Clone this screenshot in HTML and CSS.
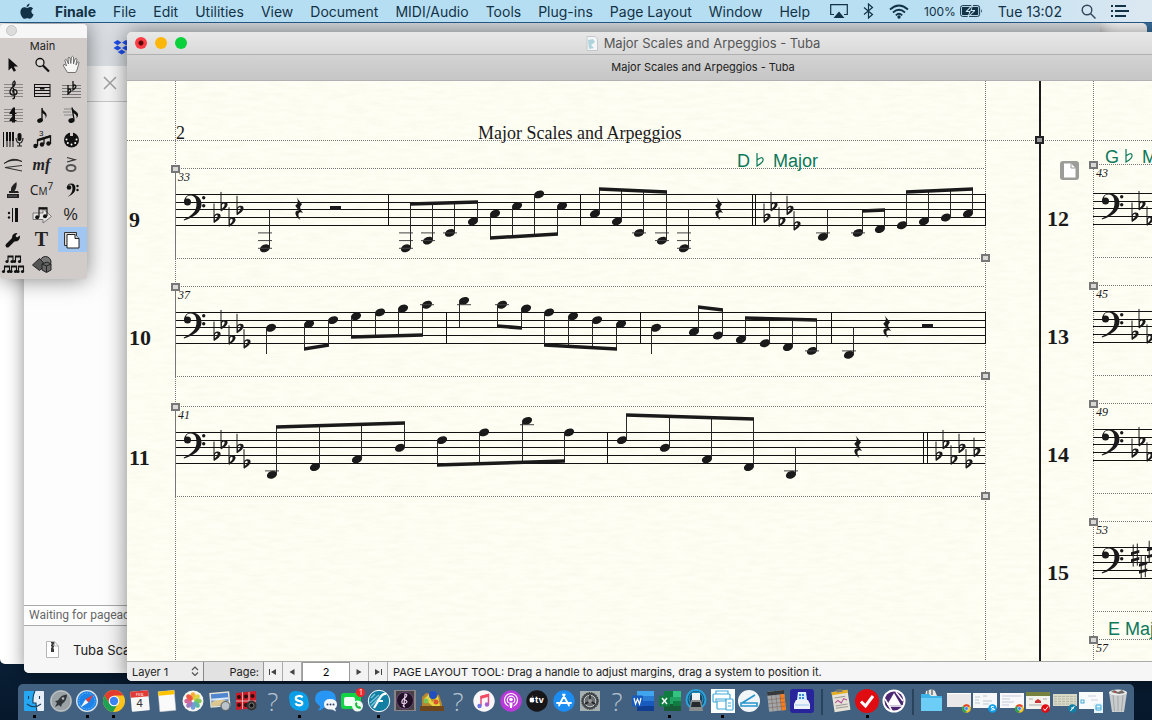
FILE: index.html
```html
<!DOCTYPE html>
<html lang="en">
<head>
    <meta charset="UTF-8">
    <meta name="viewport" content="width=device-width, initial-scale=1.0">
    <title>Major Scales and Arpeggios - Tuba</title>
    <link rel="stylesheet" href="styles.css">
</head>
<body>
    <header class="menubar">
        <nav class="menus">
            <button class="apple" aria-label="Apple menu"><svg width="14" height="17" viewBox="0 0 14 17"><path d="M9.6 0.5c.1 1.800-1.400 3.500-3 3.500-.2-1.600 1.400-3.300 3-3.500zM7.100 5c.8 0 1.700-.9 3.100-.9 1.200 0 2.300.7 2.900 1.500-2.500 1.500-2.100 4.900.5 5.900-.6 1.700-2.100 4.300-3.600 4.300-1 0-1.400-.6-2.700-.6s-1.700.6-2.700.6C2.700 15.800.4 12.200.4 9c0-3.100 2-4.700 3.900-4.700 1.200 0 2.100.7 2.800.7z"/></svg></button>
            <button class="app-name">Finale</button>
            <button>File</button>
            <button>Edit</button>
            <button>Utilities</button>
            <button>View</button>
            <button>Document</button>
            <button>MIDI/Audio</button>
            <button>Tools</button>
            <button>Plug-ins</button>
            <button>Page Layout</button>
            <button>Window</button>
            <button>Help</button>
        </nav>
        <div class="extras">
            <svg width="18" height="15" viewBox="0 0 18 15"><path d="M4 10.500H.7V.7h16.600v9.800H14" fill="none" stroke="#123247" stroke-width="1.200"/><path d="M9 7.500l5.500 6.500h-11z"/></svg>
            <svg width="11" height="16" viewBox="0 0 11 16"><path d="M1 4.500l8.500 7L5.500 15V1l4 3.500-8.500 7" fill="none" stroke="#123247" stroke-width="1.200"/></svg>
            <svg width="20" height="15" viewBox="0 0 20 15" fill="none" stroke="#123247" stroke-width="1.800"><path d="M1 5.500q9-8 18 0M4 8.500q6-5.500 12 0M6.800 11.300q3.200-3 6.400 0"/><circle cx="10" cy="13" r=".8"/></svg>
            <span class="battery">100% <svg width="23" height="12" viewBox="0 0 23 12"><rect x=".6" y=".6" width="19" height="10.800" rx="2" fill="none" stroke="#123247"/><rect x="2" y="2" width="16.200" height="8"/><path d="M21 4q1.800 2 0 4z"/><path d="M12.500 0L6 6.500h4L8 12l7-6.500h-4z" fill="#cfe6f3" stroke="#cfe6f3"/><path d="M12 1.500L7.500 6h3.200L9 10.500 13.500 6h-3.200z"/></svg></span>
            <span class="clock">Tue 13:02</span>
            <svg width="15" height="15" viewBox="0 0 15 15" fill="none" stroke="#33475a" stroke-width="1.400"><circle cx="6" cy="6" r="4.800"/><path d="M9.500 9.500l5 5"/></svg>
            <svg width="18" height="12" viewBox="0 0 18 12"><path d="M0 0h2v2H0zM4 0h11v2H4zM0 5h2v2H0zM4 5h14v2H4zM0 10h2v2H0zM4 10h11v2H4z"/></svg>
        </div>
    </header>

    <main class="desktop">
        <section class="window back-window"></section>

        <section class="window browser">
            <div class="tab-strip">
                <svg class="dropbox" width="18" height="15" viewBox="0 0 18 15" fill="#1d4ff0"><path d="M4.500 0l4 2.600-4 2.600-4-2.600zM13 0l4 2.600-4 2.600-4-2.600zM4.500 5.400l4 2.600-4 2.600-4-2.600zM13 5.400L17 8l-4 2.600L9 8zM8.700 9.500l4 2.500-4 2.600-4-2.600z"/></svg>
            </div>
            <div class="toolbar">
                <button aria-label="Stop"><svg width="14" height="14" viewBox="0 0 14 14"><path d="M1 1l12 12M13 1L1 13" stroke="#a2a2a4" stroke-width="1.500"/></svg></button>
            </div>
            <div class="page-area"></div>
            <div class="status">Waiting for pagead2.googlesyndication.com</div>
            <div class="downloads">
                <svg width="13" height="17" viewBox="0 0 13 17"><path d="M.5.500h8L12.500 5v11.500H.5z" fill="#fff" stroke="#b5b5b5"/><path d="M8.500.5V5h4" fill="none" stroke="#b5b5b5"/><path d="M5 1h3v10H5z" fill="#3c3c3c"/><path d="M5 3h1M7 4h1M5 6h1M7 7h1" stroke="#ddd"/></svg>
                <span>Tuba Scales.zip</span>
            </div>
        </section>

        <section class="window finale">
            <div class="titlebar">
                <div class="lights">
                    <button class="close" aria-label="Close"></button>
                    <button class="minimise" aria-label="Minimise"></button>
                    <button class="zoom" aria-label="Zoom"></button>
                </div>
                <h1><svg width="12" height="15" viewBox="0 0 12 15"><path d="M1 .5h8L11.500 3v11.500H1z" fill="#f3f5f6" stroke="#c4c8ca"/><path d="M2 4l5-1 2 3-4 3 3 3-5 1z" fill="#9dcbd6" opacity=".8"/></svg>Major Scales and Arpeggios - Tuba</h1>
            </div>
            <div class="doc-tab">Major Scales and Arpeggios - Tuba</div>
            <svg class="score" id="score">
                <defs>
                    <filter id="paper" x="0" y="0" width="100%" height="100%">
                        <feTurbulence type="fractalNoise" baseFrequency="0.05 0.25" numOctaves="3" seed="4"/>
                        <feColorMatrix values="0 0 0 0 .7  0 0 0 0 .68  0 0 0 0 .5  .7 0 0 0 -.28"/>
                    </filter>
                    <g id="clef">
                        <path d="M9.200-8C9-13 13-15.500 17-15.300C22.500-15 26.500-11.500 26.500-5.500C26.500 2 19 8 9 10.600L8.700 9.700C17 6 21.500 1.500 21.500-5.500C21.500-11 19.500-14 16-14.200C12.500-14.300 11-12.500 11-10.500L12-8z"/>
                        <circle cx="12.500" cy="-7.700" r="3.500"/>
                        <circle cx="28.700" cy="-12" r="1.700"/>
                        <circle cx="28.700" cy="-4" r="1.700"/>
                    </g>
                    <g id="flat">
                        <path d="M0-14v19" stroke="#1a1a1a" fill="none"/>
                        <path fill-rule="evenodd" d="M0-2C2-4.800 6.800-4.500 6.600-1.500C6.400 1.500 3 3.500 0 5.500zM.8-1V2.800C2.800 1.200 3.800-.3 3.600-1.700C3.400-3 2-2.600.8-1z"/>
                    </g>
                    <g id="sharp">
                        <path d="M-1.800-10.500V11.500M2.300-11.500V10.500" stroke="#1a1a1a" fill="none"/>
                        <path d="M-4-2.800L4.300-5.200V-2.300L-4 .1zM-4 4.200L4.300 1.800V4.700L-4 7.100z"/>
                    </g>
                    <path id="rest" d="M-2.500-12L3-5C.5-2.500 .5-1 4 3.700C0 1.500-2.500 4 1.500 10.800C-5 6.500-5 .5-.2 1.200L-3.800-3.500C-.5-6-.5-8.500-2.500-12z"/>
                </defs>
                <rect width="100%" height="100%" filter="url(#paper)" opacity=".35"/>
                <g id="page" transform="translate(-127 -81)"></g>
            </svg>
            <div class="statusbar">
                <div class="layer">
                    <select aria-label="Layer"><option>Layer 1</option></select>
                    <svg width="8" height="10" viewBox="0 0 8 10"><path d="M1 4l3-3 3 3M1 6.500l3 3 3-3" fill="none" stroke="#555" stroke-width="1.200"/></svg>
                </div>
                <label for="pageNumber">Page:</label>
                <button aria-label="First page"><svg width="8" height="8" viewBox="0 0 8 8"><path d="M0 1h1v6H0zM7 1v6L2 4z"/></svg></button>
                <button aria-label="Previous page"><svg width="8" height="8" viewBox="0 0 8 8"><path d="M6.500 1v6L1.500 4z"/></svg></button>
                <input id="pageNumber" type="text" value="2">
                <button aria-label="Next page"><svg width="8" height="8" viewBox="0 0 8 8"><path d="M1.500 1v6l5-3z"/></svg></button>
                <button aria-label="Last page"><svg width="8" height="8" viewBox="0 0 8 8"><path d="M7 1h1v6H7zM1 1v6l5-3z"/></svg></button>
                <p>PAGE LAYOUT TOOL: Drag a handle to adjust margins, drag a system to position it.</p>
            </div>
        </section>

        <section class="palette">
            <div class="palette-bar"><button aria-label="Close palette"></button></div>
            <h2>Main</h2>
            <div class="tools">
                <button aria-label="Selection"><svg viewBox="0 0 24 22"><path d="M7.500 4v12.500l3-2.800 2.300 4 2.200-1.200-2.200-4h4.200z"/></svg></button>
                <button aria-label="Zoom"><svg viewBox="0 0 24 22"><circle cx="10" cy="8.500" r="4" fill="#dedad8" stroke="#111" stroke-width="1.300"/><path d="M13 11.500l6 6" stroke="#111" stroke-width="2.200"/></svg></button>
                <button aria-label="Hand grabber"><svg viewBox="0 0 24 22"><path d="M8.500 18.500L4.500 12q-.5-2 1.500-1.500l1.500 1.500L5.800 6q.7-1.600 2 0L9.500 10 9 4q1-1.600 2 0l.8 5.500L12.500 3q1.300-1.500 2 0v7L16 5q1.400-1.300 2 0l-1 6 1.500-3q1.500-.7 1.500.8l-2 7.200-1.500 2.500z" fill="#f7f5f4" stroke="#666" stroke-width=".9"/></svg></button>

                <button aria-label="Staff"><svg viewBox="0 0 24 22"><path d="M3 5.500h19M3 8.500h19M3 11.500h19M3 14.500h19M3 17.500h19" stroke="#8a8785"/><path d="M11.500 19.500q2 .5 2-1.500L11.800 5q0-2.500 1.700-3 1.500 2.500-.5 5-4 3-4 6 0 3 3.500 3t3.500-3q-.5-2.500-2.500-2.300-2.500.8-1.300 3" fill="none" stroke="#111" stroke-width="1.300"/></svg></button>
                <button aria-label="Measure"><svg viewBox="0 0 24 22"><path d="M4 5.500h16M4 8.500h16M4 11.500h16M4 14.500h16M4 17.500h16M4.500 5v13M20 5v13" stroke="#111" fill="none"/><path d="M10 8.500h4.500v2H10z"/></svg></button>
                <button aria-label="Key signature"><svg viewBox="0 0 24 22"><path d="M3 6.500h19M3 9.500h19M3 12.500h19M3 15.500h19M3 18.500h19" stroke="#777"/><path d="M9 6v9q4-3 2.500-4.500T9 12M14 2v9q4-3 2.500-4.500T14 8" fill="none" stroke="#111" stroke-width="1.300"/></svg></button>

                <button aria-label="Time signature"><svg viewBox="0 0 24 22"><path d="M3 5.500h19M3 8.500h19M3 11.500h19M3 14.500h19M3 17.500h19" stroke="#8a8785"/><path d="M12 3.500h2V9h1.500v1H14v1.500h-3V10H8.500V9zM12 11.500h2V16h1.500v1H14v1.500h-3V17H8.500v-1z"/></svg></button>
                <button aria-label="Simple entry"><svg viewBox="0 0 24 22"><path d="M12 4v13" stroke="#111" stroke-width="1.300"/><ellipse cx="10" cy="16.500" rx="2.900" ry="2.200" transform="rotate(-20 10 16.500)"/><path d="M12 3.500q.5 3 3 4.500 3 3 .5 6.500 1-4-3.500-5.500z"/></svg></button>
                <button aria-label="Speedy entry"><svg viewBox="0 0 24 22"><path d="M5 5h9M4 8h8M5 11h9" stroke="#888"/><path d="M13 3.500l2 12" stroke="#111" stroke-width="1.300"/><ellipse cx="12.500" cy="16.500" rx="3.200" ry="2.300" transform="rotate(-20 12.500 16.500)"/><path d="M13 3.500q2 3 4 4 4 3 .5 7 1-4-3.500-5.500z"/></svg></button>

                <button aria-label="HyperScribe"><svg viewBox="0 0 24 22"><path d="M2.500 3v15M6 3v15M9 3v15M12 3v15" stroke="#111"/><path d="M5 3h2v9H5zM8 3h2v9H8zM11 3h2v9h-2z"/><rect x="16.500" y="4" width="4" height="8" rx="2"/><path d="M15 9q.5 5 3.500 5T22 9M18.500 14v3M16 17h5" fill="none" stroke="#222" stroke-width="1.200"/></svg></button>
                <button aria-label="Tuplet"><svg viewBox="0 0 24 22"><text x="9" y="7" class="tuplet">3</text><path d="M7.500 17v-6L20.500 7v8M14 15V9" fill="none" stroke="#111" stroke-width="1.300"/><path d="M7.500 10L20.500 6v2.500l-13 4z"/><circle cx="5.500" cy="17" r="2.200"/><circle cx="12" cy="15.500" r="2.200"/><circle cx="18.500" cy="14.500" r="2.200"/></svg></button>
                <button aria-label="MIDI"><svg viewBox="0 0 24 22"><circle cx="12.500" cy="11" r="7.500"/><path d="M11 3h3v4h-3z" fill="#d1ccc9"/><g fill="#fff"><circle cx="7.500" cy="10.500" r="1"/><circle cx="8.800" cy="14" r="1"/><circle cx="12.500" cy="15.500" r="1"/><circle cx="16.200" cy="14" r="1"/><circle cx="17.500" cy="10.500" r="1"/></g></svg></button>

                <button aria-label="Smart shape"><svg viewBox="0 0 24 22"><path d="M3 9.500Q12 2 21 7.500 12 4 3 9.500z" stroke="#222" stroke-width=".8"/><path d="M21 11.500L4 13.500l17 3.500" fill="none" stroke="#333" stroke-width="1.200"/></svg></button>
                <button aria-label="Expression"><i class="mf">mf</i></button>
                <button aria-label="Articulation"><svg viewBox="0 0 24 22"><path d="M8 3.500l8 2.200-8 2.300" fill="none" stroke="#333" stroke-width="1.200"/><ellipse cx="12" cy="14" rx="4.500" ry="3" fill="none" stroke="#555" stroke-width="2"/></svg></button>

                <button aria-label="Lyrics"><svg viewBox="0 0 24 22"><path d="M10 13q-1-6 5.500-10 1 6-3.500 11zM8 12h9l1 2H8zM6 15h12v4H6z" fill="#222"/><path d="M7 17h9" stroke="#666"/></svg></button>
                <button aria-label="Chord" class="chord">C<small>M</small><sup>7</sup></button>
                <button aria-label="Clef"><svg viewBox="0 0 24 22"><path d="M8.500 8Q8 4.500 12 4.500q4.500 0 4.500 5 0 5-8 8.500 5-3.500 5-8.500 0-4-2.500-4-2 0-2 2z"/><circle cx="10" cy="8.500" r="2.300"/><circle cx="18.500" cy="7" r="1.200"/><circle cx="18.500" cy="11" r="1.200"/></svg></button>

                <button aria-label="Repeat"><svg viewBox="0 0 24 22"><circle cx="8" cy="9" r="1.200"/><circle cx="8" cy="13.500" r="1.200"/><path d="M11 4h1v14h-1zM14 4h3v14h-3z"/></svg></button>
                <button aria-label="Mirror"><svg viewBox="0 0 24 22"><path d="M3 9h10V4.500l8.500 8L13 19v-3.500H3z" fill="#e8e5e3" stroke="#777"/><path d="M9 13V4h8v8" fill="none" stroke="#222" stroke-width="1.300"/><path d="M9 3.500h8v2H9z"/><circle cx="7.200" cy="13.200" r="2"/><circle cx="15" cy="12.200" r="2"/></svg></button>
                <button aria-label="Resize" class="percent">%</button>

                <button aria-label="Special tools"><svg viewBox="0 0 24 22"><path d="M6.500 16.500l7-7" stroke="#111" stroke-width="4" stroke-linecap="round"/><path d="M11 9q0-5 5.500-5l-2 3 1.500 1.500L19 6.500q.5 6-5.500 6z"/></svg></button>
                <button aria-label="Text" class="text">T</button>
                <button aria-label="Page layout" class="selected"><svg viewBox="0 0 24 22"><path d="M5.500 3.500h12v13h-12z" fill="#dcdad8" stroke="#333"/><path d="M8 5.500h8l4 4v9.500H8z" fill="#fff" stroke="#222"/><path d="M16 5.500v4h4" fill="#ccc" stroke="#222"/></svg></button>

                <button aria-label="Graphics"><svg viewBox="0 0 24 22"><path d="M7 7V2h5v5M14.500 7V2h5v5M3.500 17v-5h5v5M10.500 17v-5h5v5M17.500 17v-5h5v5" fill="none" stroke="#111" stroke-width="1.100"/><path d="M7 2h5v1.500H7zM14.500 2h5v1.500h-5zM3.500 12h5v1.500h-5zM10.500 12h5v1.500h-5zM17.500 12h5v1.500h-5z"/><g><circle cx="6" cy="7.500" r="1.600"/><circle cx="11" cy="7.500" r="1.600"/><circle cx="13.500" cy="7.500" r="1.600"/><circle cx="18.500" cy="7.500" r="1.600"/><circle cx="2.500" cy="17.500" r="1.600"/><circle cx="7.500" cy="17.500" r="1.600"/><circle cx="10" cy="17.500" r="1.600"/><circle cx="14.500" cy="17.500" r="1.600"/><circle cx="17" cy="17.500" r="1.600"/><circle cx="21.500" cy="17.500" r="1.600"/></g></svg></button>
                <button aria-label="Shapes"><svg viewBox="0 0 24 22" stroke="#222"><circle cx="15.500" cy="8" r="5.500" fill="#777"/><path d="M2.500 11l7-6.500 6 6.500-6 5.500z" fill="#555"/><path d="M12 10l5-2 4 2v6l-4.500 2.500L12 16z" fill="#666"/><path d="M12 10l4.500 2 4.500-2M16.500 12v6" fill="none"/></svg></button>
            </div>
        </section>
    </main>

    <nav class="dock" aria-label="Dock">
        <button class="open" aria-label="Finder"><svg viewBox="0 0 24 24"><rect x="2" y="2" width="20" height="20" rx="1" fill="#27a8f3"/><path d="M13 2h8q1 0 1 1v18q0 1-1 1h-6q-1-4-1-8h-3q0-7 2-12z" fill="#e8eef5"/><path d="M6.500 7v3M17.500 7v3M5 15q7 5.500 14 0M13 2q-2.500 5-2 12h3q0 4 1 8" fill="none" stroke="#16405f" stroke-width="1.100"/></svg></button>
        <button aria-label="Launchpad"><svg viewBox="0 0 24 24"><circle cx="12" cy="12" r="11" fill="#9aa2a6"/><circle cx="12" cy="12" r="10" fill="none" stroke="#c5cacc"/><path d="M18 5.500q-6 0-9 6l-3 .5 2 2-2 4 4-2 2 2 1-3q5-3.500 5-9.500z" fill="#30363a"/><circle cx="14" cy="9.500" r="1.300" fill="#bbb"/></svg></button>
        <button class="open" aria-label="Safari"><svg viewBox="0 0 24 24"><circle cx="12" cy="12" r="11" fill="#dfe5ea"/><circle cx="12" cy="12" r="9.700" fill="#1c83e8"/><circle cx="12" cy="12" r="8" fill="none" stroke="#8fc8fa" stroke-dasharray="1 1.500"/><path d="M18.500 5.500L13.500 13.500l-3-3z" fill="#f0392e"/><path d="M5.500 18.500l5-8 3 3z" fill="#f3f5f8"/></svg></button>
        <button class="open" aria-label="Chrome"><svg viewBox="0 0 24 24"><circle cx="12" cy="12" r="11" fill="#fbc31b"/><path d="M2.500 6.500A11 11 0 0 1 21.500 6.500H12L7.300 14.700z" fill="#e33b2e"/><path d="M2.500 6.500A11 11 0 0 0 11 23l5-8.500H7.300z" fill="#1fa153"/><circle cx="12" cy="12" r="5.300" fill="#fff"/><circle cx="12" cy="12" r="4.200" fill="#3b82f2"/></svg></button>
        <button aria-label="Calendar"><svg viewBox="0 0 24 24"><g transform="rotate(-5 12 12)"><rect x="3" y="2" width="18" height="20" rx="1" fill="#f7f7f7"/><path d="M3 2h18v6H3z" fill="#e23a35"/></g><text x="8" y="7" class="cal-month">FEB</text><text x="8" y="18" class="cal-day">4</text></svg></button>
        <button aria-label="Notes"><svg viewBox="0 0 24 24"><g transform="rotate(-5 12 12)"><rect x="4" y="2" width="16" height="20" fill="#fafafa" stroke="#ccc" stroke-width=".5"/><path d="M4 2h16v4H4z" fill="#ffc400"/></g></svg></button>
        <button aria-label="Photos"><svg viewBox="0 0 24 24"><circle cx="12" cy="12" r="10.500" fill="#f6f4ee"/><g opacity=".85"><ellipse cx="12" cy="7" rx="2.500" ry="3.700" fill="#f8a11b"/><ellipse cx="12" cy="7" rx="2.500" ry="3.700" fill="#d9cf26" transform="rotate(45 12 12)"/><ellipse cx="12" cy="7" rx="2.500" ry="3.700" fill="#74bd3b" transform="rotate(90 12 12)"/><ellipse cx="12" cy="7" rx="2.500" ry="3.700" fill="#3eae92" transform="rotate(135 12 12)"/><ellipse cx="12" cy="7" rx="2.500" ry="3.700" fill="#5a8fd6" transform="rotate(180 12 12)"/><ellipse cx="12" cy="7" rx="2.500" ry="3.700" fill="#8d64b6" transform="rotate(225 12 12)"/><ellipse cx="12" cy="7" rx="2.500" ry="3.700" fill="#cb4f8d" transform="rotate(270 12 12)"/><ellipse cx="12" cy="7" rx="2.500" ry="3.700" fill="#ee3b24" transform="rotate(315 12 12)"/></g></svg></button>
        <button aria-label="Preview"><svg viewBox="0 0 24 24"><g transform="rotate(-5 12 12)"><rect x="2" y="3" width="20" height="15" fill="#e9e4d5"/><rect x="3.500" y="4.500" width="17" height="12" fill="#4f86cf"/><path d="M3.500 13q6-5 17 0v3.500h-17z" fill="#ddc690"/><path d="M3.500 9h17v2h-17z" fill="#dceaf7"/></g><circle cx="17.500" cy="17" r="4.500" fill="#b9c3c9" stroke="#565b5e"/></svg></button>
        <button aria-label="Photo Booth"><svg viewBox="0 0 24 24"><path d="M2 4l20-2v17L2 21z" fill="#c91c27"/><path d="M8.500 3v17M15 3v16M2 12h20" stroke="#eee" stroke-width=".7"/><g fill="#2b1010"><circle cx="5" cy="8" r="2"/><circle cx="12" cy="7.500" r="2"/><circle cx="18.500" cy="7" r="2"/><circle cx="5" cy="16" r="2"/><circle cx="12" cy="16" r="2"/></g><circle cx="17.500" cy="16.500" r="5" fill="#333"/><circle cx="17.500" cy="16.500" r="2.500" fill="#111" stroke="#777"/></svg></button>
        <button class="missing" aria-label="Missing application">?</button>
        <button class="open" aria-label="Skype"><svg viewBox="0 0 24 24"><rect x="2" y="2" width="13" height="13" rx="6" fill="#0b9fe8"/><rect x="9" y="9" width="13" height="13" rx="6" fill="#0b9fe8"/><circle cx="12" cy="12" r="9.500" fill="#0b9fe8"/><path d="M15.500 8.500Q14 6.500 11.500 7 8.700 7.300 8.800 9.500q.2 1.700 3 2.300 3.500.5 3.500 2.500t-3.300 2q-2.500 0-3.500-2" fill="none" stroke="#fff" stroke-width="2.200"/></svg></button>
        <button aria-label="Messages"><svg viewBox="0 0 24 24"><path d="M11.500 1.500q10.500 0 10.500 8.500t-10.500 8.500H10q-2.500 3-6 3 2.500-2 2-4.500Q1 14 1 10q0-8.500 10.500-8.500z" fill="#2796f4"/><path d="M16 10q7 0 7 5.500 0 2.500-2 4l1 3-4-2q-8 .5-8-5 0-5.500 6-5.500z" fill="#f4f7fa"/><g fill="#346"><circle cx="13.500" cy="15.500" r="1"/><circle cx="16.500" cy="15.500" r="1"/><circle cx="19.500" cy="15.500" r="1"/></g></svg></button>
        <button aria-label="FaceTime"><svg viewBox="0 0 24 24"><rect x="1" y="4" width="20" height="16" rx="3" fill="#12d444"/><rect x="4" y="8" width="11" height="9" rx="2" fill="#f2fff4"/><circle cx="17.500" cy="17" r="5.500" fill="#eefbef"/><path d="M15 14.500q0 5 5.500 5.500l.5-2-2-1-1 .5-1-2 .5-1-1-1.500z" fill="#18bb40"/></svg><span class="badge">1</span></button>
        <button class="open" aria-label="Finale"><svg viewBox="0 0 24 24"><circle cx="12" cy="12" r="10.700" fill="#127fa3" stroke="#fff"/><path d="M3 14l9-8M4 17L16 5M8 5L4 9" stroke="#78c5d9" stroke-width="1.500"/><path d="M19.500 5q-4-1-6.500 4L7 19M10 12h6" stroke="#fff" stroke-width="2.200" fill="none"/></svg></button>
        <button aria-label="ARIA Player"><svg viewBox="0 0 24 24"><rect x="1" y="1" width="22" height="21" fill="#8a8488"/><rect x="3" y="2" width="18" height="19" fill="#464047"/><circle cx="12" cy="11.500" r="8.500" fill="#211025" stroke="#6c4a79"/><path d="M12 18q-3-1-1-2l1-11q3 0 1 3-5 3-4 6 3 2 5-1-1-3-3-1" fill="none" stroke="#e7cfeb" stroke-width="1.200"/></svg></button>
        <button aria-label="Sibelius First"><svg viewBox="0 0 24 24"><path d="M2 8l4-4 13 2 3 9v7H2z" fill="#b78630"/><path d="M4 10l5-5 3 8 6-6 2 10-5 2z" fill="#e5d63f"/><circle cx="13" cy="6" r="4" fill="#214fc2"/><circle cx="6" cy="12" r="2.500" fill="#7ac35b"/><circle cx="16" cy="13" r="2.500" fill="#da542e"/><path d="M0 17h24v5H0z" fill="#6d461c"/></svg></button>
        <button class="missing" aria-label="Missing application">?</button>
        <button aria-label="Music"><svg viewBox="0 0 24 24"><circle cx="12" cy="12" r="10.700" fill="#f9f6f8"/><path d="M9 17V7.500l7.500-2V15" fill="none" stroke="#e54c80" stroke-width="1.500"/><path d="M8.500 7l8.500-2.200v3L8.500 10z" fill="#f34b64"/><circle cx="7.500" cy="17" r="2.200" fill="#6d74e8"/><circle cx="15" cy="15.500" r="2.200" fill="#a95dcc"/></svg></button>
        <button aria-label="Podcasts"><svg viewBox="0 0 24 24"><circle cx="12" cy="12" r="10.700" fill="#b839d8"/><circle cx="12" cy="11" r="6.500" fill="none" stroke="#fff" stroke-width="1.200"/><circle cx="12" cy="11" r="3.800" fill="none" stroke="#fff" stroke-width="1.200"/><path d="M9 14h6l-1 6h-4z" fill="#b839d8"/><circle cx="12" cy="10.500" r="1.800" fill="#fff"/><path d="M10.300 13.500h3.400l-.7 5.500h-2z" fill="#fff"/></svg></button>
        <button aria-label="TV"><svg viewBox="0 0 24 24"><circle cx="12" cy="12" r="10.700" fill="#161618"/><path d="M7 8q-.2-1 .7-1.400.2 1-.7 1.400zm-1 .6q1 .3 2 0 1 .1 1.200.6-1 1.200.3 2.300-.6 2-1.700 2-1-.3-1.600 0Q4.400 13.300 4.500 10.500q.3-1.700 1.500-1.900z" fill="#fff"/><text x="10" y="14" class="tv">tv</text></svg></button>
        <button aria-label="App Store"><svg viewBox="0 0 24 24"><circle cx="12" cy="12" r="10.700" fill="#1c8df2"/><path d="M12.700 5.500L7 16.500M11 5.500l6 11M5 14h14" stroke="#fff" stroke-width="1.800" stroke-linecap="round"/></svg></button>
        <button aria-label="System Preferences"><svg viewBox="0 0 24 24"><rect x="2" y="2" width="20" height="20" fill="#a6b0b1"/><circle cx="12" cy="12" r="8.300" fill="#454a4c" stroke="#282b2c" stroke-dasharray="1.500 1"/><circle cx="12" cy="12" r="5.800" fill="#686d6f" stroke="#c4c8c9"/><path d="M12 12V6M12 12l5 3M12 12l-5 3" stroke="#222" stroke-width="1.500"/><circle cx="12" cy="12" r="2" fill="#999"/></svg></button>
        <button class="missing" aria-label="Missing application">?</button>
        <button aria-label="Word"><svg viewBox="0 0 24 24"><path d="M6 2h17v20H6z" fill="#2b7cd3"/><path d="M6 2h17v5H6z" fill="#41a5ee"/><path d="M6 12h17v5H6z" fill="#185abd"/><path d="M6 17h17v5H6z" fill="#103f91"/><rect x="1" y="6.500" width="11" height="11" rx="1" fill="#185abd"/><path d="M3 9l1.500 6 2-5 2 5L10 9" fill="none" stroke="#fff" stroke-width="1.200"/></svg></button>
        <button class="open" aria-label="Excel"><svg viewBox="0 0 24 24"><path d="M6 2h17v20H6z" fill="#21a366"/><path d="M6 2h9v6H6z" fill="#107c41"/><path d="M15 2h8v6h-8z" fill="#33c481"/><path d="M6 15h17v7H6z" fill="#185c37"/><path d="M15 12h8v5h-8z" fill="#107c41"/><rect x="1" y="6.500" width="11" height="11" rx="1" fill="#107c41"/><path d="M4 9l5 6M9 9l-5 6" stroke="#fff" stroke-width="1.400"/></svg></button>
        <button aria-label="Image Capture"><svg viewBox="0 0 24 24"><circle cx="12" cy="10.500" r="9.500" fill="#184763" stroke="#2aa3dd" stroke-width="2"/><circle cx="12" cy="10" r="7" fill="none" stroke="#2aa3dd"/><path d="M8 4h8v8H8z" fill="#edf1f2"/><path d="M7 11h10l2 11H5z" fill="#898d8e"/><path d="M8 13h8l1 5H7z" fill="#252a2d"/></svg></button>
        <button class="open" aria-label="Print Centre"><svg viewBox="0 0 24 24"><path d="M0 0h24v24H0z" fill="#fff"/><g fill="#fff" stroke="#43a9da" stroke-width="1.200"><path d="M5 5V2h12v3"/><rect x="2" y="5" width="17" height="8" rx="1"/><path d="M5 13v-3h10v3"/><rect x="6" y="12" width="13" height="8" rx="1"/><rect x="15" y="10" width="7" height="11" rx="1"/><path d="M17 14h3M17 17h3"/></g></svg></button>
        <button aria-label="Scan"><svg viewBox="0 0 24 24"><circle cx="12" cy="12" r="11" fill="#f2f5f7"/><path d="M5 14L18 6M4 14h16v3H4z" fill="none" stroke="#2495cd" stroke-width="1.600"/></svg></button>
        <button aria-label="Calculator"><svg viewBox="0 0 24 24"><g transform="rotate(-6 12 12)"><rect x="4" y="2" width="17" height="20" rx="1" fill="#a3a6a8"/><path d="M4 2h17v4H4z" fill="#36393b"/><path d="M16.500 6H21v16h-4.500z" fill="#f57c1f"/><path d="M4 10h17M4 14h17M4 18h17M8 6v16M12.500 6v16M16.500 6v16" stroke="#6c4f41" stroke-width=".4"/></g></svg></button>
        <button aria-label="Disk Copy"><svg viewBox="0 0 24 24"><rect x="0" y="0" width="24" height="24" rx="3" fill="#27249c"/><path d="M8 3h8l1 8H7z" fill="#d8efff"/><path d="M9 6h6M9 9h6" stroke="#3484d8" stroke-width="2" stroke-dasharray="2 1"/><path d="M6 11h12l2 4v5H4v-5z" fill="#eef3fb"/><path d="M5 16h14" stroke="#9dc4eb"/></svg></button>
        <hr>
        <button aria-label="Documents"><svg viewBox="0 0 24 24"><g transform="rotate(-9 12 12)"><rect x="4" y="2" width="16" height="20" fill="#e6e2d5"/><path d="M4 2h16v3H4z" fill="#e6af22"/><path d="M9 0h6v3H9z" fill="#777"/><path d="M6 8h11M6 16h12M6 18.500h12" stroke="#999"/><path d="M6 13l3-2 3 3 3-4 3 2" fill="none" stroke="#b44c9c"/></g></svg></button>
        <button class="open" aria-label="Tasks"><svg viewBox="0 0 24 24"><circle cx="12" cy="12" r="12" fill="#e10b12"/><path d="M6 12.500l4.500 4.500L18 7" fill="none" stroke="#fff" stroke-width="3"/></svg></button>
        <button aria-label="Avid Link"><svg viewBox="0 0 24 24"><circle cx="12" cy="12" r="11.500" fill="#fff"/><circle cx="12" cy="12" r="9.500" fill="#4a2673"/><path d="M12 4l7 12H5z" fill="#fff"/><path d="M3 10l7 12M14 3l7 9M21 17H7" stroke="#fff" stroke-width="1.500"/></svg></button>
        <hr>
        <button aria-label="Downloads"><svg viewBox="0 0 24 24"><path d="M6 2l6-2 3 2 2 5H5z" fill="#e7e8e8"/><path d="M8 1v6M12 0v6" stroke="#555" stroke-width="1.200"/><path d="M1 5h8l2 2h11v15H1z" fill="#3eb3e8"/><path d="M1 9h21v13H1z" fill="#6ccef6"/></svg></button>
        <button aria-label="Minimised browser"><svg viewBox="0 0 24 24"><path d="M0 4h24v14H0z" fill="#e9e7e7"/><path d="M0 4h24v1H0z" fill="#fff"/><circle cx="19.500" cy="19.500" r="4.300" fill="#fbc31b"/><path d="M16 17a4.300 4.300 0 0 1 7 0l-3.500 2z" fill="#e33b2e"/><path d="M16 17a4.300 4.300 0 0 0 3 6.800l1-4z" fill="#1fa153"/><circle cx="19.500" cy="19.500" r="1.900" fill="#3b82f2" stroke="#fff" stroke-width=".6"/></svg></button>
        <button aria-label="Minimised chat"><svg viewBox="0 0 24 24"><path d="M0 4h24v15H0z" fill="#f6f7f9"/><path d="M2 8h5M2 11h4M2 14h5M10 7h4M10 12h9M10 15h6" stroke="#bfc6cf"/><circle cx="19.500" cy="19.500" r="4.300" fill="#0b9fe8"/><path d="M21 18q-3-1.500-3 0t3 2-3 1.200" fill="none" stroke="#fff"/></svg></button>
        <button aria-label="Minimised browser"><svg viewBox="0 0 24 24"><path d="M0 4h24v15H0z" fill="#f8f8fa"/><path d="M2 7h19M2 10h8M2 13h12M2 16h7" stroke="#c4cbdc"/><circle cx="19.500" cy="19.500" r="4.300" fill="#fbc31b"/><path d="M16 17a4.300 4.300 0 0 1 7 0l-3.500 2z" fill="#e33b2e"/><path d="M16 17a4.300 4.300 0 0 0 3 6.800l1-4z" fill="#1fa153"/><circle cx="19.500" cy="19.500" r="1.900" fill="#3b82f2" stroke="#fff" stroke-width=".6"/></svg></button>
        <button aria-label="Minimised tasks"><svg viewBox="0 0 24 24"><path d="M0 3h24v17H0z" fill="#f3f3ee"/><path d="M0 3h24v4H0z" fill="#77823e"/><path d="M9 12l3-2 3 2v2H9z" fill="#c33"/><path d="M3 10h4M3 16h13M17 10h4" stroke="#aaa"/><circle cx="19.500" cy="19.500" r="4.300" fill="#e10b12"/><path d="M17.500 19.500l1.500 2 3-4" fill="none" stroke="#fff"/></svg></button>
        <button aria-label="Minimised score"><svg viewBox="0 0 24 24"><path d="M0 5h24v12H0z" fill="#d9d9c6"/><path d="M1 7.500h22M1 10h22M1 12.500h22M1 15h22" stroke="#b8b8aa" stroke-dasharray="3 1"/><circle cx="19.500" cy="19.500" r="4.300" fill="#127fa3"/><path d="M21.500 17l-4 5M18 19h3" stroke="#fff"/></svg></button>
        <button aria-label="Minimised printer"><svg viewBox="0 0 24 24"><path d="M0 3h24v17H0z" fill="#f8fafb"/><rect x="2" y="11" width="3" height="3" fill="none" stroke="#43a9da"/><path d="M9 7h8M12 11h7" stroke="#ccd"/><path d="M15 14h9v10h-9z" fill="#e6f5fb"/><path d="M17 16h5v5h-5zM17 19h5" fill="none" stroke="#43a9da"/></svg></button>
        <button aria-label="Bin"><svg viewBox="0 0 24 24"><path d="M3 3h18l-3 20H6z" fill="#c9cccd"/><path d="M7 6l1.500 16M12 6v16M17 6l-1.500 16" stroke="#a3a7a9"/><ellipse cx="12" cy="3.500" rx="9" ry="3" fill="#e9ebeb"/><path d="M5 3l3-2 4 2 4-2 3 3-6 1z" fill="#736c68"/><circle cx="9" cy="3" r="1" fill="#b44"/></svg></button>
    </nav>

    <script src="script.js"></script>
</body>
</html>
```

FILE: styles.css
```css
* {
  box-sizing: border-box;
}
body {
  margin: 0;
  height: 100vh;
  display: flex;
  flex-direction: column;
  overflow: hidden;
  font-family: Inter, "Liberation Sans", sans-serif;
  font-size: 13px;
  color: #222;
  background: linear-gradient(#3d76a6, #0b2038 90%, #06182b);
}
button {
  border: none;
  padding: 0;
  background: none;
  font: inherit;
  color: inherit;
}

/* Menu bar */
.menubar {
  height: 23px;
  display: flex;
  align-items: center;
  justify-content: space-between;
  padding: 0 23px 0 20px;
  background: linear-gradient(90deg, #b6def2 60%, #b9dff2 80%, #dce8f1);
  border-bottom: 1px solid #245580;
  color: #123247;
  fill: #123247;
  font-size: 14px;
}
.menus, .extras {
  display: flex;
  align-items: center;
  white-space: nowrap;
}
.menus {
  gap: 17px;
}
.menus .apple {
  display: flex;
  margin-right: 4px;
}
.menus .app-name {
  font-weight: bold;
}
.extras {
  gap: 15px;
}
.battery {
  display: flex;
  align-items: center;
  gap: 4px;
  font-size: 12px;
}
.clock {
  margin-right: 4px;
}

/* Desktop windows */
.desktop {
  flex: 1;
  position: relative;
  overflow: hidden;
}
.window {
  position: absolute;
  display: flex;
  flex-direction: column;
}
.back-window {
  left: 0;
  top: 0;
  right: 5px;
  bottom: 56px;
  background: #fff;
  border-radius: 0 5px 5px 5px;
}
.browser {
  left: 24px;
  top: 0;
  right: 52px;
  bottom: 47px;
  background: #fdfdfd;
  border-radius: 0 5px 5px 5px;
  box-shadow: 0 0 18px rgba(0, 0, 0, 0.45);
}
.tab-strip {
  height: 43px;
  padding: 17px 0 0 89px;
  background: #dce0e4;
  border-radius: 0 5px 0 0;
}
.toolbar {
  height: 36px;
  padding: 10px 0 0 79px;
  background: #f8f8f9;
  border-bottom: 1px solid #c9c9cb;
}
.page-area {
  flex: 1;
}
.status {
  height: 21px;
  padding-left: 5px;
  border: 1px solid #a9a9a9;
  border-left: none;
  background: #fff;
  font-family: Roboto, "Liberation Sans", sans-serif;
  font-size: 12px;
  line-height: 19px;
  color: #666;
}
.downloads {
  height: 47px;
  display: flex;
  align-items: center;
  gap: 14px;
  padding: 0 0 0 22px;
  font-size: 13px;
  background: #f6f6f6;
  border-radius: 0 0 5px 5px;
}

/* Score window */
.finale {
  left: 127px;
  top: 9px;
  bottom: 39px;
  width: 100vw;
  border-radius: 5px;
  overflow: hidden;
  background: #f4f4f4;
}
.palette, .finale {
  box-shadow: 0 0 22px rgba(0, 0, 0, 0.5);
}
.titlebar {
  position: relative;
  height: 23px;
  background: linear-gradient(#e8e8e8, #d9d9d9);
  border-bottom: 1px solid #b0b0b0;
}
.titlebar h1 {
  display: flex;
  align-items: center;
  justify-content: center;
  gap: 6px;
  margin: 0;
  font-size: 13px;
  font-weight: normal;
  line-height: 22px;
  color: #555;
}
.lights {
  position: absolute;
  left: 8px;
  top: 5px;
  display: flex;
  gap: 8px;
}
.lights button {
  width: 12px;
  height: 12px;
  border-radius: 50%;
}
.lights .close {
  background: radial-gradient(#5c0508 2px, #fc3d45 3px);
}
.lights .minimise {
  background: #fdb70b;
}
.lights .zoom {
  background: #08d13c;
}
.doc-tab {
  height: 26px;
  background: linear-gradient(#d3d3d3, #c6c6c6);
  border-bottom: 1px solid #b3b0b3;
  font-size: 11px;
  line-height: 25px;
  text-align: center;
}
.score {
  flex: 1;
  min-height: 0;
  width: 100%;
  background: #fefef4;
  fill: #1a1a1a;
}
.score .staff-line {
  fill: #111;
  shape-rendering: crispEdges;
}
.score .guide {
  stroke: #777;
  stroke-dasharray: 1 1;
  fill: none;
  shape-rendering: crispEdges;
}
.score .stem {
  stroke: #2a2a2a;
}
.score .ledger {
  stroke: #444;
}
.score .handle {
  fill: #d8d8d4;
  stroke: #777;
  stroke-width: 2;
}
.score .page-handle {
  fill: #999;
  stroke: #222;
  stroke-width: 2;
}
.score text {
  font-family: "Liberation Serif", serif;
}
.score .heading {
  font-size: 18px;
}
.score .number {
  font-size: 22px;
  font-weight: bold;
}
.score .measure {
  font-size: 12px;
  font-style: italic;
}
.score .key-name {
  font-family: "Liberation Sans", sans-serif;
  font-size: 18px;
  fill: #0b785a;
}

.statusbar {
  height: 20px;
  display: flex;
  border-top: 1px solid #aaa;
  background: #f6f6f6;
  font-size: 11px;
  line-height: 20px;
}
.layer {
  position: relative;
  width: 77px;
  background: #ececec;
  border-right: 1px solid #888;
}
.layer select {
  width: 100%;
  height: 19px;
  padding: 0 5px;
  border: none;
  background: none;
  appearance: none;
  font: inherit;
  color: #222;
}
.layer svg {
  position: absolute;
  right: 4px;
  top: 4px;
}
.statusbar label {
  width: 60px;
  padding-right: 4px;
  text-align: right;
  background: #e2e2e2;
  border-right: 1px solid #999;
}
.statusbar button {
  width: 19px;
  display: flex;
  align-items: center;
  justify-content: center;
  background: #f2f2f2;
  border-right: 1px solid #aaa;
  fill: #444;
}
.statusbar input {
  width: 48px;
  border: 1px solid #999;
  border-width: 1px 1px 0 1px;
  background: #fff;
  font: inherit;
  text-align: center;
}
.statusbar p {
  margin: 0;
  padding-left: 5px;
  white-space: nowrap;
}

/* Tool palette */
.palette {
  position: absolute;
  left: 0;
  top: 1px;
  width: 87px;
  padding-bottom: 2px;
  background: #d1ccc9;
  border-radius: 4px;
  overflow: hidden;
}
.palette-bar {
  height: 14px;
  padding: 1px 6px;
  background: #f6f6f6;
}
.palette-bar button {
  display: block;
  width: 11px;
  height: 11px;
  border: 1px solid #c4c4c4;
  border-radius: 50%;
  background: #dcdcdc;
}
.palette h2 {
  margin: 0;
  font-size: 11px;
  font-weight: normal;
  line-height: 14px;
  padding: 1px 2px 0 0;
  height: 14px;
  text-align: center;
}
.tools {
  display: grid;
  grid-template-columns: repeat(3, 29px);
  grid-auto-rows: 25px;
  fill: #111;
}
.tools button {
  display: flex;
  align-items: center;
  justify-content: center;
  padding-right: 4px;
}
.tools svg {
  width: 24px;
  height: 22px;
}
.tools .selected {
  background: #a0c6f1;
}
.tools .tuplet {
  font: 8px "Liberation Sans", sans-serif;
}
.mf {
  font: italic bold 16px "Liberation Serif", serif;
}
.tools .chord {
  font-family: "Open Sans", sans-serif;
  font-size: 14px;
}
.chord small {
  font-size: 10px;
  align-self: center;
  padding-top: 3px;
}
.chord sup {
  font-size: 10px;
  align-self: flex-start;
  padding-top: 2px;
}
.tools .percent {
  font-size: 16px;
  font-family: "Liberation Sans", sans-serif;
}
.tools .text {
  font: bold 20px "Liberation Serif", serif;
}

/* Dock */
.dock {
  position: absolute;
  left: 18px;
  right: 18px;
  bottom: 0;
  height: 36px;
  display: flex;
  padding: 0 3px;
  background: #426180;
  border-radius: 5px 5px 0 0;
}
.dock button {
  position: relative;
  flex: 1;
  display: flex;
  justify-content: center;
  align-items: flex-start;
  padding-top: 5px;
}
.dock button svg {
  width: 24px;
  height: 24px;
}
.dock .open::after {
  content: "";
  position: absolute;
  bottom: 2px;
  width: 3px;
  height: 3px;
  background: #000;
}
.dock hr {
  width: 2px;
  height: 26px;
  margin: 5px 5px;
  border: none;
  background: #29435c;
}
.dock .missing {
  font: 26px/24px "Open Sans", sans-serif;
  font-weight: 300;
  color: #b5c3d0;
}
.badge {
  position: absolute;
  right: 0;
  top: 4px;
  width: 9px;
  height: 9px;
  border-radius: 50%;
  background: #ef2727;
  color: #fff;
  font-size: 7px;
  line-height: 9px;
  text-align: center;
}
.cal-month {
  font: 4px Inter, sans-serif;
  fill: #fff;
}
.cal-day {
  font: 11px Inter, sans-serif;
  fill: #333;
}
.tv {
  font: bold 9px Inter, sans-serif;
  fill: #fff;
}
```

FILE: script.js
```js
const NS = 'http://www.w3.org/2000/svg';
const page = document.getElementById('page');
const STEP = 3.85; // distance between a line and the next space
const FLATS = [[0, -2], [7, 1], [15, -3], [23, 0], [30, -4], [38, -1]];
const SHARPS = [[3, 2], [11, -1], [19, 3]];

function add(tag, attrs, text) {
    const el = document.createElementNS(NS, tag);
    for (const key in attrs) el.setAttribute(key, attrs[key]);
    if (text) el.textContent = text;
    page.appendChild(el);
}

function line(cls, x1, y1, x2, y2) {
    add('path', { class: cls, d: `M${x1} ${y1}L${x2} ${y2}` });
}

function glyph(id, x, y) {
    add('use', { href: '#' + id, transform: `translate(${x} ${y})` });
}

function label(cls, x, y, text) {
    add('text', { class: cls, x: x, y: y }, text);
}

function handle(x, y, cls) {
    add('rect', { class: cls || 'handle', x: x - 3.5, y: y - 3, width: 7, height: 6 });
}

function barline(x, top) {
    add('rect', { class: 'staff-line', x: x, y: top, width: 1, height: 32 });
}

function head(x, pos, mid) {
    const y = mid - pos * STEP;
    add('ellipse', { cx: x, cy: y, rx: 5.3, ry: 3.7, transform: `rotate(-22 ${x} ${y})` });
    for (let p = -6; p >= pos; p -= 2) line('ledger', x - 7, mid - p * STEP, x + 7, mid - p * STEP);
    for (let p = 6; p <= pos; p += 2) line('ledger', x - 7, mid - p * STEP, x + 7, mid - p * STEP);
    return y;
}

// beam: [y at the first stem, y at the last stem], up: stems point up
function group(notes, beam, up, mid) {
    const side = up ? 4.5 : -4.5;
    const first = notes[0][0] + side;
    const last = notes[notes.length - 1][0] + side;
    notes.forEach(([x, pos]) => {
        const y = head(x, pos, mid);
        const sx = x + side;
        const by = beam[0] + (beam[1] - beam[0]) * (sx - first) / (last - first || 1);
        line('stem', sx, y, sx, by);
    });
    if (notes.length > 1) {
        add('path', { d: `M${first - 0.5} ${beam[0] - 1.8}L${last + 0.5} ${beam[1] - 1.8}V${beam[1] + 1.8}L${first - 0.5} ${beam[0] + 1.8}z` });
    }
}

function system(s) {
    const mid = s.top + 15.8;
    const right = s.right || 1279;
    const bottom = s.bottom || s.frame + 90;
    line('guide', s.x, s.frame + 0.5, right, s.frame + 0.5);
    line('guide', s.x, bottom + 0.5, right, bottom + 0.5);
    [0, 8, 15, 23, 31].forEach(dy => {
        add('rect', { class: 'staff-line', x: s.x, y: s.top + dy, width: right - s.x, height: 1 });
    });
    glyph('clef', s.x, mid);
    const signs = s.sharps ? SHARPS : FLATS.slice(0, s.flats);
    signs.forEach(([dx, pos]) => glyph(s.sharps ? 'sharp' : 'flat', s.x + 39 + dx, mid - pos * STEP));
    label('number', s.x - 46, s.number[1], s.number[0]);
    label('measure', s.x + 3, s.frame + 13, s.measure);
    (s.bars || []).forEach(x => barline(x, s.top));
    (s.groups || []).forEach(([up, y1, y2, ...notes]) => group(notes, [y1, y2], up, mid));
    (s.rests || []).forEach(x => glyph('rest', x, mid - 0.5));
    (s.halfRests || []).forEach(x => add('rect', { x: x - 5, y: s.top + 12, width: 11, height: 4 }));
    handle(s.x + 0.5, s.frame + 1);
    if (s.right) {
        add('rect', { x: s.x, y: s.frame + 4, width: 1, height: 86, fill: '#777' });
        handle(s.right + 0.5, bottom);
    }
}

// margins of the two pages
line('guide', 127, 140.5, 1279, 140.5);
line('guide', 175.5, 81, 175.5, 661);
line('guide', 985.5, 81, 985.5, 661);
line('guide', 1093.5, 81, 1093.5, 661);
add('rect', { x: 1039, y: 81, width: 2, height: 580 });
handle(1039.5, 140, 'page-handle');

label('heading', 176, 139, '2');
label('heading', 478, 139, 'Major Scales and Arpeggios');

system({
    x: 175, right: 985, top: 194, frame: 168, flats: 4, number: ['9', 227], measure: '33',
    bars: [388, 580, 752, 755, 985],
    rests: [299, 719],
    halfRests: [335],
    groups: [
        [true, 210, 210, [265, -10]],
        [true, 204, 202, [406, -10], [428, -8], [450, -6], [473, -3]],
        [false, 238, 234, [495, -1], [517, 1], [539, 4], [562, 1]],
        [true, 189, 192, [595, -1], [617, -3], [639, -6], [662, -8]],
        [true, 210, 210, [684, -10]],
        [true, 210, 210, [823, -7]],
        [true, 211, 210, [858, -6], [880, -5]],
        [true, 192, 189, [902, -4], [924, -3], [946, -2], [968, -1]]
    ]
});
FLATS.slice(0, 5).forEach(([dx, pos]) => glyph('flat', 764 + dx, 209.8 - pos * STEP));

system({
    x: 175, right: 985, top: 312, frame: 286, flats: 5, number: ['10', 345], measure: '37',
    bars: [446, 640, 831, 985],
    rests: [887],
    halfRests: [927],
    groups: [
        [false, 354, 354, [271, 0]],
        [false, 349, 345, [309, 1], [333, 2]],
        [false, 337, 335, [356, 3], [380, 4], [403, 5], [427, 6]],
        [false, 327, 327, [464, 7]],
        [false, 326, 328, [502, 6], [526, 5]],
        [false, 345, 349, [549, 4], [573, 3], [597, 2], [621, 1]],
        [false, 354, 354, [656, 0]],
        [true, 307, 310, [694, -1], [718, -2]],
        [true, 318, 320, [741, -3], [765, -4], [788, -5], [812, -6]],
        [true, 327, 327, [849, -7]]
    ]
});

system({
    x: 175, right: 985, top: 432, frame: 406, flats: 5, number: ['11', 465], measure: '41',
    bars: [607, 923, 927],
    rests: [858],
    groups: [
        [true, 427, 423, [272, -7], [315, -5], [357, -3], [400, 0]],
        [false, 465, 461, [442, 2], [484, 4], [527, 7], [569, 4]],
        [true, 415, 419, [622, 2], [665, 0], [707, -3], [749, -5]],
        [true, 447, 447, [791, -7]]
    ]
});
FLATS.forEach(([dx, pos]) => glyph('flat', 936 + dx, 447.8 - pos * STEP));

// next page
system({ x: 1093, top: 193, frame: 164, bottom: 257, flats: 6, number: ['12', 226], measure: '43' });
system({ x: 1093, top: 311, frame: 285, flats: 6, number: ['13', 344], measure: '45' });
system({ x: 1093, top: 429, frame: 403, flats: 6, number: ['14', 462], measure: '49' });
system({ x: 1093, top: 547, frame: 521, sharps: true, number: ['15', 580], measure: '53' });
line('guide', 1093, 639.5, 1279, 639.5);
handle(1093.5, 640);
label('measure', 1096, 652, '57');

label('key-name', 737, 167, 'D');
label('key-name', 773, 167, 'Major');
label('key-name', 1105, 163, 'G');
label('key-name', 1142, 163, 'Major');
label('key-name', 1108, 635, 'E Major');
[[757, 162], [1126, 158]].forEach(([x, y]) => {
    add('path', { d: `M${x} ${y - 9}v13q7-4 6-7t-6 1`, fill: 'none', stroke: '#0b785a', 'stroke-width': 1.2 });
});

// page icon beside the second page
add('rect', { x: 1060, y: 161, width: 19, height: 19, rx: 3, fill: '#9c9c98' });
add('path', { d: 'M1064 163.500h7l4.500 4.500v9.500h-11.500z', fill: '#fff' });
add('path', { d: 'M1071 163.500v4.500h4.500', fill: 'none', stroke: '#999' });
```
